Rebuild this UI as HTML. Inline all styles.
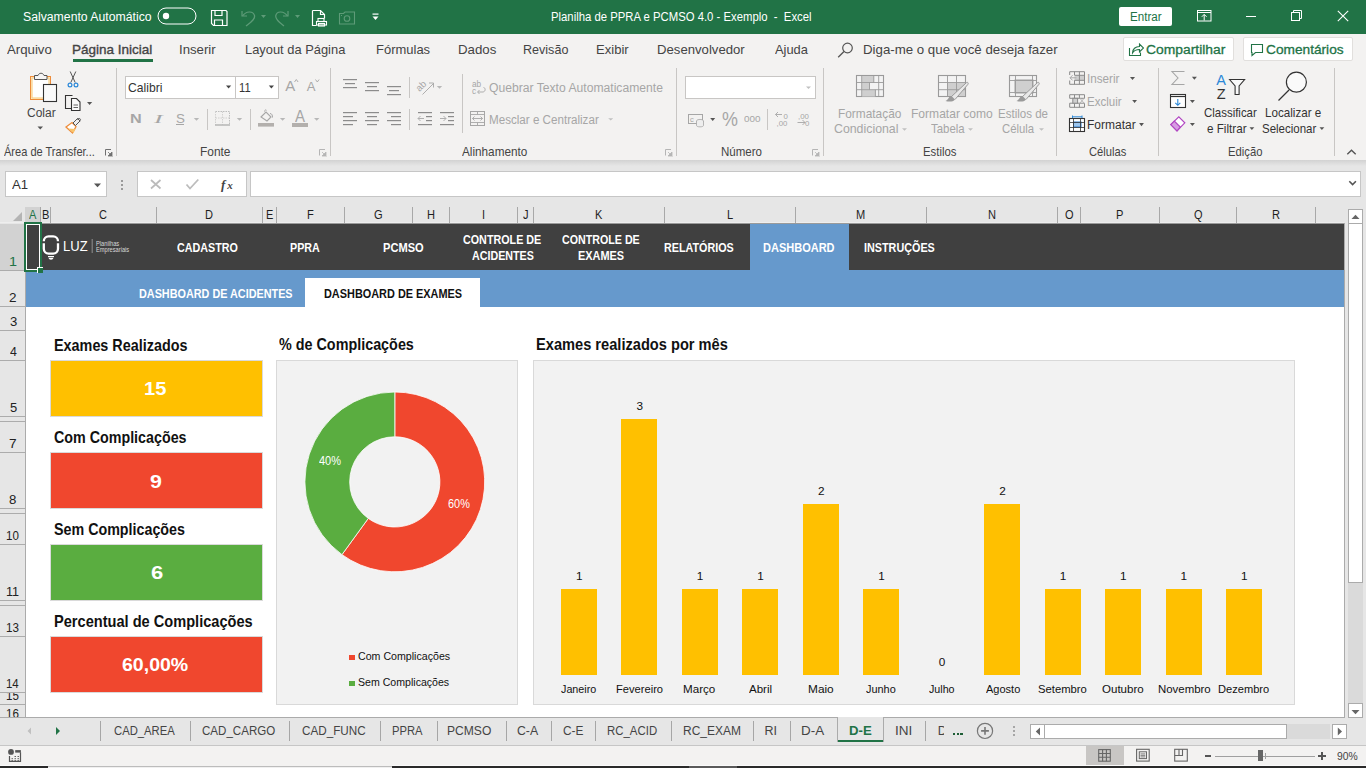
<!DOCTYPE html><html><head><meta charset="utf-8"><style>
html,body{margin:0;padding:0;width:1366px;height:768px;overflow:hidden;background:#e6e6e6}
div{position:absolute;box-sizing:border-box}
.t{line-height:0;white-space:pre;transform-origin:0 0}
svg{position:absolute}
</style></head><body>
<div style="left:0px;top:0px;width:1366px;height:34px;background:#217346;"></div>
<div class="t" style="left:22.56px;top:17px;font:normal 400 12.65px 'Liberation Sans',sans-serif;line-height:0;color:#fff;transform:scaleX(0.9684);">Salvamento Automático</div>
<svg style="position:absolute;left:157px;top:7px;" width="40" height="18" viewBox="0 0 40 18"><rect x="1" y="1" width="38" height="16" rx="8" ry="8" fill="none" stroke="#fff" stroke-width="1"/><circle cx="9" cy="9" r="3.2" fill="#fff"/></svg>
<svg style="position:absolute;left:210px;top:9px;" width="18" height="18" viewBox="0 0 18 18"><path d="M1.5 1.5h14.5l1 1v14h-13.5l-2-2z" fill="none" stroke="#fff" stroke-width="1.2"/><path d="M5 1.5v5h7v-5" fill="none" stroke="#fff" stroke-width="1.2"/><path d="M4.5 16.5v-5.5h8v5.5" fill="none" stroke="#fff" stroke-width="1.2"/></svg>
<svg style="position:absolute;left:240px;top:9px;" width="28" height="18" viewBox="0 0 28 18"><path d="M2 2v5h5" fill="none" stroke="#5e9b78" stroke-width="1.2"/><path d="M2.5 7C6 2 13 1.5 14.5 6.5C15.5 10 11 13 6 17" fill="none" stroke="#5e9b78" stroke-width="1.2"/><path d="M21 6h5l-2.5 3z" fill="#5e9b78"/></svg>
<svg style="position:absolute;left:275px;top:9px;" width="28" height="18" viewBox="0 0 28 18"><path d="M13 2v5h-5" fill="none" stroke="#5e9b78" stroke-width="1.2"/><path d="M12.5 7C9 2 2 1.5 0.8 6.5C0 10 4 13 9 17" fill="none" stroke="#5e9b78" stroke-width="1.2"/><path d="M20 6h5l-2.5 3z" fill="#5e9b78"/></svg>
<svg style="position:absolute;left:311px;top:9px;" width="18" height="18" viewBox="0 0 18 18"><path d="M1.5 1.5h8l4 4v4" fill="none" stroke="#fff" stroke-width="1.2"/><path d="M1.5 1.5v15h4" fill="none" stroke="#fff" stroke-width="1.2"/><path d="M9.5 1.5v4h4" fill="none" stroke="#fff" stroke-width="1.2"/><rect x="7" y="9.5" width="6" height="3" fill="none" stroke="#fff" stroke-width="1.1"/><rect x="5.5" y="12.5" width="10" height="3.5" fill="none" stroke="#fff" stroke-width="1.1"/><rect x="7.5" y="14.5" width="6" height="2.5" fill="none" stroke="#fff" stroke-width="1.1"/></svg>
<svg style="position:absolute;left:338px;top:10px;" width="18" height="16" viewBox="0 0 18 16"><path d="M1.5 3.5h4l1.5-1.5h9.5v12h-15z" fill="none" stroke="#5e9b78" stroke-width="1.1"/><circle cx="9" cy="8.5" r="2.8" fill="none" stroke="#5e9b78" stroke-width="1.1"/><rect x="3" y="5" width="1" height="1" fill="#5e9b78"/></svg>
<svg style="position:absolute;left:371px;top:12px;" width="10" height="10" viewBox="0 0 10 10"><rect x="1.5" y="1.5" width="6" height="1.2" fill="#fff"/><path d="M1.5 4.5h6l-3 3.5z" fill="#fff"/></svg>
<div class="t" style="left:551.36px;top:17px;font:normal 400 12.79px 'Liberation Sans',sans-serif;line-height:0;color:#fff;transform:scaleX(0.8859);">Planilha de PPRA e PCMSO 4.0 - Exemplo  -  Excel</div>
<div style="left:1119px;top:7px;width:53px;height:19px;background:#fff;border-radius:2px"></div>
<div class="t" style="left:1129.68px;top:17px;font:normal 400 12.65px 'Liberation Sans',sans-serif;line-height:0;color:#217346;transform:scaleX(0.9160);">Entrar</div>
<svg style="position:absolute;left:1197px;top:10px;" width="16" height="13" viewBox="0 0 16 13"><rect x="0.5" y="0.5" width="13.5" height="10.5" fill="none" stroke="#fff" stroke-width="1"/><path d="M0.5 2.5h13.5" stroke="#fff" stroke-width="1"/><path d="M7.2 10.5v-6M4.8 6.8l2.4-2.4 2.4 2.4" fill="none" stroke="#fff" stroke-width="1"/></svg>
<div style="left:1246px;top:16px;width:10px;height:1px;background:#fff;"></div>
<svg style="position:absolute;left:1291px;top:10px;" width="12" height="12" viewBox="0 0 12 12"><rect x="0.5" y="2.5" width="8" height="8" fill="none" stroke="#fff" stroke-width="1"/><path d="M2.5 2.5v-2h8v8h-2" fill="none" stroke="#fff" stroke-width="1"/></svg>
<svg style="position:absolute;left:1337px;top:10px;" width="12" height="12" viewBox="0 0 12 12"><path d="M0.8 0.8l10.4 10.4M11.2 0.8l-10.4 10.4" stroke="#fff" stroke-width="1.1"/></svg>
<div style="left:0px;top:34px;width:1366px;height:126px;background:#f3f2f1;"></div>
<div class="t" style="left:6.94px;top:50px;font:normal 400 12.79px 'Liberation Sans',sans-serif;line-height:0;color:#444444;transform:scaleX(1.0347);">Arquivo</div>
<div class="t" style="left:72.38px;top:50px;font:normal 400 12.79px 'Liberation Sans',sans-serif;line-height:0;color:#444444;transform:scaleX(1.0563);-webkit-text-stroke:0.35px #444444">Página Inicial</div>
<div class="t" style="left:179.27px;top:50px;font:normal 400 12.79px 'Liberation Sans',sans-serif;line-height:0;color:#444444;transform:scaleX(1.0325);">Inserir</div>
<div class="t" style="left:245.03px;top:50px;font:normal 400 12.79px 'Liberation Sans',sans-serif;line-height:0;color:#444444;transform:scaleX(1.0082);">Layout da Página</div>
<div class="t" style="left:375.82px;top:50px;font:normal 400 12.79px 'Liberation Sans',sans-serif;line-height:0;color:#444444;transform:scaleX(1.0159);">Fórmulas</div>
<div class="t" style="left:458.20px;top:50px;font:normal 400 12.79px 'Liberation Sans',sans-serif;line-height:0;color:#444444;transform:scaleX(1.0394);">Dados</div>
<div class="t" style="left:523.36px;top:50px;font:normal 400 12.79px 'Liberation Sans',sans-serif;line-height:0;color:#444444;transform:scaleX(0.9824);">Revisão</div>
<div class="t" style="left:596.22px;top:50px;font:normal 400 12.79px 'Liberation Sans',sans-serif;line-height:0;color:#444444;transform:scaleX(1.0211);">Exibir</div>
<div class="t" style="left:656.81px;top:50px;font:normal 400 12.79px 'Liberation Sans',sans-serif;line-height:0;color:#444444;transform:scaleX(1.0287);">Desenvolvedor</div>
<div class="t" style="left:774.74px;top:50px;font:normal 400 12.79px 'Liberation Sans',sans-serif;line-height:0;color:#444444;transform:scaleX(1.0065);">Ajuda</div>
<div style="left:73px;top:59px;width:80px;height:3px;background:#217346;"></div>
<svg style="position:absolute;left:837px;top:42px;" width="17" height="17" viewBox="0 0 17 17"><circle cx="10.5" cy="6" r="4.8" fill="none" stroke="#555" stroke-width="1.2"/><path d="M7 9.5l-5.8 5.8" stroke="#555" stroke-width="1.3"/></svg>
<div class="t" style="left:862.90px;top:50px;font:normal 400 12.79px 'Liberation Sans',sans-serif;line-height:0;color:#444444;transform:scaleX(1.0378);">Diga-me o que você deseja fazer</div>
<div style="left:1123px;top:37px;width:111px;height:24px;background:#fff;border:1px solid #e1dfdd;border-radius:2px"></div>
<svg style="position:absolute;left:1128px;top:42px;" width="16" height="15" viewBox="0 0 16 15"><path d="M1.5 6v7.5h11v-3" fill="none" stroke="#217346" stroke-width="1.1"/><path d="M4.5 11c0-4 3-6.5 7-6.5V2l4 4-4 4V7.5c-3 0-5.5 1-7 3.5z" fill="none" stroke="#217346" stroke-width="1.1"/></svg>
<div class="t" style="left:1145.59px;top:50px;font:normal 400 13.52px 'Liberation Sans',sans-serif;line-height:0;color:#217346;transform:scaleX(1.0260);-webkit-text-stroke:0.3px #217346">Compartilhar</div>
<div style="left:1243px;top:37px;width:110px;height:24px;background:#fff;border:1px solid #e1dfdd;border-radius:2px"></div>
<svg style="position:absolute;left:1250px;top:43px;" width="14" height="14" viewBox="0 0 14 14"><path d="M1.5 1.5h11v8h-7l-3.5 3v-3h-0.5z" fill="none" stroke="#217346" stroke-width="1.1"/></svg>
<div class="t" style="left:1266.40px;top:50px;font:normal 400 13.52px 'Liberation Sans',sans-serif;line-height:0;color:#217346;transform:scaleX(1.0131);-webkit-text-stroke:0.3px #217346">Comentários</div>
<div style="left:116px;top:68px;width:1px;height:88px;background:#c8c6c4;"></div>
<div style="left:330px;top:68px;width:1px;height:88px;background:#c8c6c4;"></div>
<div style="left:676px;top:68px;width:1px;height:88px;background:#c8c6c4;"></div>
<div style="left:823px;top:68px;width:1px;height:88px;background:#c8c6c4;"></div>
<div style="left:1056px;top:68px;width:1px;height:88px;background:#c8c6c4;"></div>
<div style="left:1158px;top:68px;width:1px;height:88px;background:#c8c6c4;"></div>
<div style="left:1334px;top:68px;width:1px;height:88px;background:#c8c6c4;"></div>
<svg style="position:absolute;left:28px;top:70px;" width="32" height="34" viewBox="28 70 32 34"><rect x="30.5" y="76.5" width="20" height="23" fill="#fdf1d8" stroke="#ed8c3a" stroke-width="1"/><rect x="32" y="78" width="17" height="20" fill="#fff" stroke="#f7c873" stroke-width="1"/><path d="M34.5 79.5v-4h3.5c1-3 5-3 6 0h3v4z" fill="#f5f5f5" stroke="#555" stroke-width="1"/><rect x="43.5" y="84.5" width="13" height="17" fill="#fafafa" stroke="#333" stroke-width="1.1"/></svg>
<div class="t" style="left:26.71px;top:113px;font:normal 400 12.65px 'Liberation Sans',sans-serif;line-height:0;color:#444444;transform:scaleX(0.9484);">Colar</div>
<svg style="position:absolute;left:36px;top:125px;" width="10" height="7" viewBox="36 125 10 7"><path d="M37.5 126.5h5.5l-2.75 3z" fill="#555"/></svg>
<svg style="position:absolute;left:64px;top:69px;" width="18" height="20" viewBox="64 69 18 20"><path d="M70.2 71.5l5 11M75.8 71.5l-5 11" stroke="#555" stroke-width="1"/><circle cx="70" cy="85" r="1.9" fill="none" stroke="#2b88d8" stroke-width="1.2"/><circle cx="76" cy="85" r="1.9" fill="none" stroke="#2b88d8" stroke-width="1.2"/></svg>
<svg style="position:absolute;left:63px;top:93px;" width="32" height="20" viewBox="63 93 32 20"><path d="M72.5 95.5h-7v13h5.5" fill="none" stroke="#333" stroke-width="1.1"/><path d="M71.5 98.5h5l3.5 3.5v8.5h-8.5z" fill="#fafafa" stroke="#333" stroke-width="1.1"/><path d="M73.5 105h4.5M73.5 107.5h4.5" stroke="#555" stroke-width="0.9"/><path d="M87 102h5.2l-2.6 3z" fill="#555"/></svg>
<svg style="position:absolute;left:63px;top:117px;" width="20" height="18" viewBox="63 117 20 18"><path d="M66 127l6-4.5 4 4-3.5 6.5z" fill="#fff" stroke="#ed8c3a" stroke-width="1.3"/><path d="M68 128.5l5.5 4.5 2-4z" fill="#f9c46a"/><path d="M73 123l4.5-4.5 2.5 2.5-4.5 4.5z" fill="#eee" stroke="#555" stroke-width="1"/><path d="M77 119.2l2.6-0.8 0.8 0.8-0.8 2.6" fill="none" stroke="#555" stroke-width="1"/></svg>
<div class="t" style="left:4.10px;top:152px;font:normal 400 12.06px 'Liberation Sans',sans-serif;line-height:0;color:#444444;transform:scaleX(0.9162);">Área de Transfer...</div>
<svg style="position:absolute;left:104px;top:147px;" width="10" height="10" viewBox="104 147 10 10"><path d="M105.5 155.5V149.5H111" fill="none" stroke="#707070" stroke-width="1"/><path d="M108 152l4.5 4.5M112 152v4h-4z" fill="#707070" stroke="#707070" stroke-width="0.8"/></svg>
<div style="left:125px;top:76px;width:111px;height:23px;background:#fff;border:1px solid #c8c6c4"></div>
<div style="left:235px;top:76px;width:44px;height:23px;background:#fff;border:1px solid #c8c6c4"></div>
<div class="t" style="left:128.11px;top:88px;font:normal 400 12.94px 'Liberation Sans',sans-serif;line-height:0;color:#333;transform:scaleX(0.9378);">Calibri</div>
<div class="t" style="left:238.94px;top:88px;font:normal 400 12.94px 'Liberation Sans',sans-serif;line-height:0;color:#333;transform:scaleX(0.8635);">11</div>
<svg style="position:absolute;left:224px;top:83px;" width="10" height="8" viewBox="224 83 10 8"><path d="M226 85.5h5.2l-2.6 3z" fill="#444"/></svg>
<svg style="position:absolute;left:267px;top:83px;" width="10" height="8" viewBox="267 83 10 8"><path d="M268.8 85.5h5.2l-2.6 3z" fill="#444"/></svg>
<div class="t" style="left:285.24px;top:86px;font:normal 400 14.97px 'Liberation Sans',sans-serif;line-height:0;color:#a6a6a6;">A</div>
<svg style="position:absolute;left:293px;top:78px;" width="7" height="6" viewBox="293 78 7 6"><path d="M294.5 82l1.8-2.5 1.8 2.5" fill="none" stroke="#a6a6a6" stroke-width="0.9"/></svg>
<div class="t" style="left:306.74px;top:87px;font:normal 400 13.08px 'Liberation Sans',sans-serif;line-height:0;color:#a6a6a6;">A</div>
<svg style="position:absolute;left:314px;top:78px;" width="7" height="6" viewBox="314 78 7 6"><path d="M315.5 79.5l1.8 2.5 1.8-2.5" fill="none" stroke="#a6a6a6" stroke-width="0.9"/></svg>
<div class="t" style="left:129.69px;top:119px;font:normal 700 12.79px 'Liberation Sans',sans-serif;line-height:0;color:#a6a6a6;transform:scaleX(1.2667);">N</div>
<div class="t" style="left:153.71px;top:119px;font:normal 400 12.79px 'Liberation Serif',serif;line-height:0;color:#a6a6a6;transform:scaleX(2.0444);font-style:italic">I</div>
<div class="t" style="left:175.51px;top:119px;font:normal 400 12.79px 'Liberation Sans',sans-serif;line-height:0;color:#a6a6a6;transform:scaleX(1.0441);">S</div>
<div style="left:176px;top:124px;width:8px;height:1px;background:#a6a6a6;"></div>
<svg style="position:absolute;left:192px;top:116px;" width="9" height="6" viewBox="192 116 9 6"><path d="M193.8 118h5.4l-2.7 2.7z" fill="#b8b8b8"/></svg>
<div style="left:207px;top:109px;width:1px;height:21px;background:#c8c6c4;"></div>
<svg style="position:absolute;left:213px;top:109px;" width="20" height="19" viewBox="213 109 20 19"><path d="M215.5 111.5h14v13" fill="none" stroke="#b8b8b8" stroke-width="0.9" stroke-dasharray="1.5 1"/><path d="M215.5 111.5v13M222.5 111.5v13M215.5 118h14" fill="none" stroke="#c8c8c8" stroke-width="0.8" stroke-dasharray="1.5 1"/><path d="M215 125h15" stroke="#a6a6a6" stroke-width="1.2"/></svg>
<svg style="position:absolute;left:235px;top:116px;" width="9" height="6" viewBox="235 116 9 6"><path d="M236.8 118h5.4l-2.7 2.7z" fill="#b8b8b8"/></svg>
<div style="left:250px;top:109px;width:1px;height:21px;background:#c8c6c4;"></div>
<svg style="position:absolute;left:256px;top:108px;" width="22" height="20" viewBox="256 108 22 20"><path d="M261 117l5-5 5 5-4 4z" fill="none" stroke="#a6a6a6" stroke-width="1.1"/><path d="M264.5 111.5c0-1.5 1.5-2 2-1.2" fill="none" stroke="#a6a6a6" stroke-width="1"/><path d="M270 113.5c2 0 2.5 2 2.5 4" fill="none" stroke="#a6a6a6" stroke-width="1"/><rect x="258" y="123" width="16" height="3.6" fill="#b3b0ad"/></svg>
<svg style="position:absolute;left:278px;top:116px;" width="9" height="6" viewBox="278 116 9 6"><path d="M279.9 118h5.4l-2.7 2.7z" fill="#b8b8b8"/></svg>
<div class="t" style="left:295.24px;top:117px;font:normal 400 15.99px 'Liberation Sans',sans-serif;line-height:0;color:#a6a6a6;transform:scaleX(0.9373);">A</div>
<div style="left:292px;top:123px;width:16px;height:4px;background:#b3b0ad;"></div>
<svg style="position:absolute;left:312px;top:116px;" width="9" height="6" viewBox="312 116 9 6"><path d="M314 118h5.4l-2.7 2.7z" fill="#b8b8b8"/></svg>
<div class="t" style="left:199.71px;top:152px;font:normal 400 12.06px 'Liberation Sans',sans-serif;line-height:0;color:#444444;transform:scaleX(0.9893);">Fonte</div>
<svg style="position:absolute;left:318px;top:147px;" width="10" height="10" viewBox="318 147 10 10"><path d="M319.5 155.5V149.5H325" fill="none" stroke="#b5b5b5" stroke-width="1"/><path d="M322 152l4.5 4.5M326 152v4h-4z" fill="#b5b5b5" stroke="#b5b5b5" stroke-width="0.8"/></svg>
<svg style="position:absolute;left:335px;top:72px;" width="130" height="60" viewBox="335 72 130 60"><rect x="343" y="79" width="14" height="1.2" fill="#8c8c8c"/><rect x="345" y="83" width="10" height="1.2" fill="#8c8c8c"/><rect x="343" y="87" width="14" height="1.2" fill="#8c8c8c"/><rect x="365" y="82" width="14" height="1.2" fill="#8c8c8c"/><rect x="367" y="86" width="10" height="1.2" fill="#8c8c8c"/><rect x="365" y="90" width="14" height="1.2" fill="#8c8c8c"/><rect x="387" y="86" width="14" height="1.2" fill="#8c8c8c"/><rect x="389" y="90" width="10" height="1.2" fill="#8c8c8c"/><rect x="387" y="94" width="14" height="1.2" fill="#8c8c8c"/><rect x="343" y="112" width="14" height="1.2" fill="#8c8c8c"/><rect x="343" y="116" width="10" height="1.2" fill="#8c8c8c"/><rect x="343" y="120" width="14" height="1.2" fill="#8c8c8c"/><rect x="343" y="124" width="10" height="1.2" fill="#8c8c8c"/><rect x="365" y="112" width="14" height="1.2" fill="#8c8c8c"/><rect x="367" y="116" width="10" height="1.2" fill="#8c8c8c"/><rect x="365" y="120" width="14" height="1.2" fill="#8c8c8c"/><rect x="367" y="124" width="10" height="1.2" fill="#8c8c8c"/><rect x="387" y="112" width="14" height="1.2" fill="#8c8c8c"/><rect x="391" y="116" width="10" height="1.2" fill="#8c8c8c"/><rect x="387" y="120" width="14" height="1.2" fill="#8c8c8c"/><rect x="391" y="124" width="10" height="1.2" fill="#8c8c8c"/><rect x="418" y="112" width="14" height="1.2" fill="#8c8c8c"/><rect x="418" y="124" width="14" height="1.2" fill="#8c8c8c"/><rect x="426" y="116" width="6" height="1.2" fill="#8c8c8c"/><rect x="426" y="120" width="6" height="1.2" fill="#8c8c8c"/><rect x="440" y="112" width="14" height="1.2" fill="#8c8c8c"/><rect x="440" y="124" width="14" height="1.2" fill="#8c8c8c"/><rect x="448" y="116" width="6" height="1.2" fill="#8c8c8c"/><rect x="448" y="120" width="6" height="1.2" fill="#8c8c8c"/><path d="M424 118.5h-6M420.5 116l-2.5 2.5 2.5 2.5" fill="none" stroke="#b0b0b0" stroke-width="1"/><path d="M440 118.5h6M443.5 116l2.5 2.5-2.5 2.5" fill="none" stroke="#b0b0b0" stroke-width="1"/></svg>
<div style="left:409px;top:77px;width:1px;height:21px;background:#c8c6c4;"></div>
<div style="left:409px;top:109px;width:1px;height:21px;background:#c8c6c4;"></div>
<svg style="position:absolute;left:414px;top:76px;" width="32" height="22" viewBox="414 76 32 22"><text x="0" y="0" transform="translate(419.5 92) rotate(-45)" font-family="Liberation Sans" font-size="9.5" fill="#a6a6a6">ab</text><path d="M422.5 94.5l11-11M429 83h4.5v4.5" fill="none" stroke="#a6a6a6" stroke-width="0.9"/><path d="M436.8 86h5.4l-2.7 2.7z" fill="#b8b8b8"/></svg>
<div style="left:462px;top:74px;width:1px;height:59px;background:#c8c6c4;"></div>
<svg style="position:absolute;left:469px;top:78px;" width="20" height="18" viewBox="469 78 20 18"><text x="472" y="86.5" font-family="Liberation Sans" font-size="8.3" fill="#a6a6a6">ab</text><text x="472" y="94" font-family="Liberation Sans" font-size="8.3" fill="#a6a6a6">c</text><path d="M483.5 87.5c2 0 2.5 4-0.5 4.5h-5M479.5 90l-2 2 2 2" fill="none" stroke="#a6a6a6" stroke-width="0.9"/></svg>
<div class="t" style="left:488.92px;top:88px;font:normal 400 13.08px 'Liberation Sans',sans-serif;line-height:0;color:#a6a6a6;transform:scaleX(0.9286);">Quebrar Texto Automaticamente</div>
<svg style="position:absolute;left:468px;top:109px;" width="20" height="19" viewBox="468 109 20 19"><rect x="470.5" y="111.5" width="14" height="14" fill="none" stroke="#a6a6a6" stroke-width="1"/><path d="M470.5 114.5h14M470.5 122.5h14M477.5 111.5v3M477.5 122.5v3" stroke="#a6a6a6" stroke-width="0.9"/><path d="M472.5 118.5h10M474.5 116.5l-2 2 2 2M480.5 116.5l2 2-2 2" fill="none" stroke="#a6a6a6" stroke-width="0.9"/></svg>
<div class="t" style="left:488.56px;top:120px;font:normal 400 13.08px 'Liberation Sans',sans-serif;line-height:0;color:#a6a6a6;transform:scaleX(0.8884);">Mesclar e Centralizar</div>
<svg style="position:absolute;left:606px;top:116px;" width="9" height="6" viewBox="606 116 9 6"><path d="M608.2 118.2h5l-2.5 2.4z" fill="#c0c0c0"/></svg>
<div class="t" style="left:462.30px;top:152px;font:normal 400 12.06px 'Liberation Sans',sans-serif;line-height:0;color:#444444;transform:scaleX(0.9750);">Alinhamento</div>
<svg style="position:absolute;left:664px;top:147px;" width="10" height="10" viewBox="664 147 10 10"><path d="M665.5 155.5V149.5H671" fill="none" stroke="#b5b5b5" stroke-width="1"/><path d="M668 152l4.5 4.5M672 152v4h-4z" fill="#b5b5b5" stroke="#b5b5b5" stroke-width="0.8"/></svg>
<div style="left:685px;top:76px;width:131px;height:23px;background:#fff;border:1px solid #c8c6c4"></div>
<svg style="position:absolute;left:804px;top:84px;" width="9" height="7" viewBox="804 84 9 7"><path d="M806 86.5h5l-2.5 2.4z" fill="#c0c0c0"/></svg>
<svg style="position:absolute;left:686px;top:111px;" width="32" height="18" viewBox="686 111 32 18"><rect x="688.5" y="114.5" width="14" height="9" fill="none" stroke="#a6a6a6" stroke-width="1"/><text x="690" y="122" font-family="Liberation Sans" font-size="7.5" fill="#a6a6a6">c</text><ellipse cx="700" cy="121" rx="3.5" ry="1.6" fill="#eee" stroke="#a6a6a6" stroke-width="0.8"/><path d="M696.5 121v4.5c0 1.8 7 1.8 7 0v-4.5" fill="#eee" stroke="#a6a6a6" stroke-width="0.8"/><path d="M710.2 118h5l-2.5 3z" fill="#555"/></svg>
<div class="t" style="left:721.98px;top:119px;font:normal 400 19.91px 'Liberation Sans',sans-serif;line-height:0;color:#a6a6a6;transform:scaleX(0.9011);">%</div>
<div class="t" style="left:743.51px;top:119px;font:normal 400 9.59px 'Liberation Sans',sans-serif;line-height:0;color:#a6a6a6;transform:scaleX(1.0337);">000</div>
<div style="left:767px;top:109px;width:1px;height:21px;background:#c8c6c4;"></div>
<svg style="position:absolute;left:773px;top:110px;" width="42" height="18" viewBox="773 110 42 18"><path d="M782 114.5h-6.5M778 112l-2.5 2.5 2.5 2.5" fill="none" stroke="#a6a6a6" stroke-width="0.9"/><text x="783.5" y="118.5" font-family="Liberation Sans" font-size="7.8" fill="#a6a6a6">0</text><text x="776.5" y="126.3" font-family="Liberation Sans" font-size="7.8" fill="#a6a6a6">,00</text><text x="798" y="118.5" font-family="Liberation Sans" font-size="7.8" fill="#a6a6a6">,00</text><path d="M797.5 122.5h7.5M802.5 120l2.5 2.5-2.5 2.5" fill="none" stroke="#a6a6a6" stroke-width="0.9"/><text x="805" y="126.3" font-family="Liberation Sans" font-size="7.8" fill="#a6a6a6">0</text></svg>
<div class="t" style="left:720.84px;top:152px;font:normal 400 12.06px 'Liberation Sans',sans-serif;line-height:0;color:#444444;transform:scaleX(0.9571);">Número</div>
<svg style="position:absolute;left:811px;top:147px;" width="10" height="10" viewBox="811 147 10 10"><path d="M812.5 155.5V149.5H818" fill="none" stroke="#b5b5b5" stroke-width="1"/><path d="M815 152l4.5 4.5M819 152v4h-4z" fill="#b5b5b5" stroke="#b5b5b5" stroke-width="0.8"/></svg>
<svg style="position:absolute;left:854px;top:73px;" width="34" height="26" viewBox="854 73 34 26"><rect x="856.5" y="75.5" width="27" height="21" fill="#f3f3f3" stroke="#9a9a9a" stroke-width="1.1"/><rect x="862" y="76" width="12" height="6.5" fill="#cfcfcf"/><rect x="862" y="83" width="7.5" height="6.5" fill="#cfcfcf"/><rect x="862" y="90" width="13.5" height="6.5" fill="#cfcfcf"/><path d="M861.7 75.5v21M878.7 75.5v21M856.5 82.5h27M856.5 89.7h27M873.8 75.5v7M869.5 82.5v7.2M875.4 89.7v7" fill="none" stroke="#9a9a9a" stroke-width="0.9"/></svg>
<div class="t" style="left:838.31px;top:114px;font:normal 400 12.79px 'Liberation Sans',sans-serif;line-height:0;color:#a6a6a6;transform:scaleX(0.9288);">Formatação</div>
<div class="t" style="left:834.00px;top:129px;font:normal 400 12.79px 'Liberation Sans',sans-serif;line-height:0;color:#a6a6a6;transform:scaleX(0.9649);">Condicional</div>
<svg style="position:absolute;left:901px;top:127px;" width="7" height="5" viewBox="901 127 7 5"><path d="M902 128.3h5l-2.5 2.4z" fill="#c0c0c0"/></svg>
<svg style="position:absolute;left:936px;top:73px;" width="36" height="32" viewBox="936 73 36 32"><rect x="938.5" y="75.5" width="27" height="21" fill="#f3f3f3" stroke="#9a9a9a" stroke-width="1.1"/><rect x="947" y="83" width="18" height="13" fill="#cfcfcf"/><path d="M947.5 75.5v21M956.5 75.5v21M938.5 82.5h27M938.5 89.7h27" fill="none" stroke="#9a9a9a" stroke-width="0.9"/><path d="M951 97l15-14c1.5-1.5 3 0 1.8 1.5L955 99.5" fill="#e8e8e8" stroke="#9a9a9a" stroke-width="1"/><path d="M955 99.5c-2 2.5-6 2.5-9.5 1.5 3-1 3-5 6-5z" fill="#9a9a9a"/></svg>
<div class="t" style="left:910.60px;top:114px;font:normal 400 12.79px 'Liberation Sans',sans-serif;line-height:0;color:#a6a6a6;transform:scaleX(0.9443);">Formatar como</div>
<div class="t" style="left:931.22px;top:129px;font:normal 400 12.79px 'Liberation Sans',sans-serif;line-height:0;color:#a6a6a6;transform:scaleX(0.8922);">Tabela</div>
<svg style="position:absolute;left:967px;top:127px;" width="7" height="5" viewBox="967 127 7 5"><path d="M968 128.3h5l-2.5 2.4z" fill="#c0c0c0"/></svg>
<svg style="position:absolute;left:1007px;top:73px;" width="36" height="32" viewBox="1007 73 36 32"><rect x="1009.5" y="75.5" width="27" height="21" fill="#f3f3f3" stroke="#9a9a9a" stroke-width="1.1"/><rect x="1015" y="80" width="18" height="13" fill="#cfcfcf" stroke="#9a9a9a" stroke-width="0.9"/><path d="M1015.5 75.5v21M1009.5 80.5h27M1009.5 92.5h27M1032.5 75.5v21" fill="none" stroke="#9a9a9a" stroke-width="0.9"/><path d="M1022 97l15-14c1.5-1.5 3 0 1.8 1.5L1026 99.5" fill="#e8e8e8" stroke="#9a9a9a" stroke-width="1"/><path d="M1026 99.5c-2 2.5-6 2.5-9.5 1.5 3-1 3-5 6-5z" fill="#9a9a9a"/></svg>
<div class="t" style="left:997.54px;top:114px;font:normal 400 12.79px 'Liberation Sans',sans-serif;line-height:0;color:#a6a6a6;transform:scaleX(0.9029);">Estilos de</div>
<div class="t" style="left:1002.45px;top:129px;font:normal 400 12.79px 'Liberation Sans',sans-serif;line-height:0;color:#a6a6a6;transform:scaleX(0.8855);">Célula</div>
<svg style="position:absolute;left:1038px;top:127px;" width="7" height="5" viewBox="1038 127 7 5"><path d="M1039 128.3h5l-2.5 2.4z" fill="#c0c0c0"/></svg>
<div class="t" style="left:923.26px;top:152px;font:normal 400 12.06px 'Liberation Sans',sans-serif;line-height:0;color:#444444;transform:scaleX(0.9436);">Estilos</div>
<svg style="position:absolute;left:1067px;top:69px;" width="22" height="18" viewBox="1067 69 22 18"><rect x="1074.5" y="75.5" width="10" height="5" fill="#cfcfcf"/><path d="M1069.7 75V71.7H1084.5V84.3H1069.7V80.5M1074.5 71.7v3.4M1079.4 71.7v12.6M1074.5 75.3H1084.5M1074.5 80.3H1084.5M1074.5 80.3v4" fill="none" stroke="#8a8a8a" stroke-width="1"/><path d="M1076.5 77.8h-6.5M1072.6 75.2l-2.6 2.6 2.6 2.6" fill="none" stroke="#a8a8a8" stroke-width="1"/></svg>
<div class="t" style="left:1087.15px;top:79px;font:normal 400 12.50px 'Liberation Sans',sans-serif;line-height:0;color:#a6a6a6;transform:scaleX(0.9348);">Inserir</div>
<svg style="position:absolute;left:1128px;top:75px;" width="9" height="6" viewBox="1128 75 9 6"><path d="M1130 77h5l-2.5 2.9z" fill="#555"/></svg>
<svg style="position:absolute;left:1067px;top:92px;" width="22" height="18" viewBox="1067 92 22 18"><path d="M1069.7 94.7H1084.5V98.3H1069.7z M1069.7 103.2H1084.5V107.3H1069.7z M1074.5 94.7v3.6M1079.4 94.7v3.6M1074.5 103.2v4.1M1079.4 103.2v4.1" fill="none" stroke="#8a8a8a" stroke-width="1"/><rect x="1072.8" y="98.3" width="4.8" height="4.9" fill="#cfcfcf" stroke="#8a8a8a" stroke-width="1"/><path d="M1079.5 97.8l5 5.8M1084.5 97.8l-5 5.8" stroke="#b0b0b0" stroke-width="0.9"/></svg>
<div class="t" style="left:1087.28px;top:102px;font:normal 400 12.50px 'Liberation Sans',sans-serif;line-height:0;color:#a6a6a6;transform:scaleX(0.9225);">Excluir</div>
<svg style="position:absolute;left:1130px;top:98px;" width="9" height="6" viewBox="1130 98 9 6"><path d="M1132.2 100h4.8l-2.4 2.9z" fill="#555"/></svg>
<svg style="position:absolute;left:1067px;top:114px;" width="22" height="20" viewBox="1067 114 22 20"><rect x="1069.5" y="118.5" width="15" height="13" fill="#fff" stroke="#333" stroke-width="1.1"/><rect x="1073.5" y="122" width="7.5" height="5" fill="#9cc6ee" stroke="#2b7cd3" stroke-width="1"/><path d="M1069.5 122.5h15M1069.5 127.5h15M1073.5 118.5v13M1080.5 118.5v13" stroke="#333" stroke-width="0.8"/><path d="M1072.5 116.8h9.5M1072.5 115.5v2.6M1082 115.5v2.6" stroke="#2b88d8" stroke-width="1"/></svg>
<div class="t" style="left:1087.23px;top:125px;font:normal 400 13.08px 'Liberation Sans',sans-serif;line-height:0;color:#333;transform:scaleX(0.9170);">Formatar</div>
<svg style="position:absolute;left:1137px;top:121px;" width="9" height="6" viewBox="1137 121 9 6"><path d="M1139.1 123h4.8l-2.4 3.2z" fill="#555"/></svg>
<div class="t" style="left:1088.72px;top:152px;font:normal 400 12.06px 'Liberation Sans',sans-serif;line-height:0;color:#444444;transform:scaleX(0.9263);">Células</div>
<svg style="position:absolute;left:1169px;top:69px;" width="30" height="18" viewBox="1169 69 30 18"><path d="M1184.5 71.5h-12.5l6 6.5-6 6.5h12.5" fill="none" stroke="#a6a6a6" stroke-width="1.1"/><path d="M1191.9 76.8h5l-2.5 3z" fill="#555"/></svg>
<svg style="position:absolute;left:1168px;top:92px;" width="30" height="18" viewBox="1168 92 30 18"><rect x="1170.5" y="94.5" width="15" height="13" fill="#fff" stroke="#333" stroke-width="1.1"/><path d="M1170.5 96.5h15" stroke="#333" stroke-width="1.2"/><path d="M1177.8 99v6M1175.3 102.8l2.5 2.5 2.5-2.5" fill="none" stroke="#2b88d8" stroke-width="1.1"/><path d="M1189.9 100h5l-2.5 3z" fill="#555"/></svg>
<svg style="position:absolute;left:1168px;top:115px;" width="30" height="19" viewBox="1168 115 30 19"><path d="M1170.8 124.6l8-7.8 6 6-7.8 8z" fill="#fff" stroke="#b146c2" stroke-width="1.2"/><path d="M1170.8 124.6l3.5-3.5 6 6-3.3 3.8z" fill="#d79be3" stroke="#b146c2" stroke-width="1.2"/><path d="M1189.9 123h5l-2.5 3z" fill="#555"/></svg>
<svg style="position:absolute;left:1214px;top:71px;" width="34" height="30" viewBox="1214 71 34 30"><text x="1216.3" y="84.8" font-family="Liberation Sans" font-size="14.5" fill="#2b88d8">A</text><text x="1216.8" y="98.9" font-family="Liberation Sans" font-size="14.5" fill="#333">Z</text><path d="M1229.6 79.5h15l-5.5 6.5v8.5h-4v-8.5z" fill="#fafafa" stroke="#333" stroke-width="1.1"/></svg>
<div class="t" style="left:1203.95px;top:113px;font:normal 400 12.94px 'Liberation Sans',sans-serif;line-height:0;color:#333;transform:scaleX(0.8849);">Classificar</div>
<div class="t" style="left:1206.79px;top:129px;font:normal 400 12.94px 'Liberation Sans',sans-serif;line-height:0;color:#333;transform:scaleX(0.9020);">e Filtrar</div>
<svg style="position:absolute;left:1249px;top:126px;" width="7" height="5" viewBox="1249 126 7 5"><path d="M1249.5 127.3h4.8l-2.4 2.6z" fill="#555"/></svg>
<svg style="position:absolute;left:1276px;top:69px;" width="34" height="34" viewBox="1276 69 34 34"><circle cx="1296.4" cy="82.2" r="10" fill="#fafafa" stroke="#333" stroke-width="1.2"/><path d="M1289 90l-10.5 10.5" stroke="#333" stroke-width="1.2"/></svg>
<div class="t" style="left:1265.34px;top:113px;font:normal 400 12.94px 'Liberation Sans',sans-serif;line-height:0;color:#333;transform:scaleX(0.8993);">Localizar e</div>
<div class="t" style="left:1261.90px;top:129px;font:normal 400 12.94px 'Liberation Sans',sans-serif;line-height:0;color:#333;transform:scaleX(0.8878);">Selecionar</div>
<svg style="position:absolute;left:1318px;top:126px;" width="7" height="5" viewBox="1318 126 7 5"><path d="M1319.5 127.3h4.8l-2.4 2.6z" fill="#555"/></svg>
<div class="t" style="left:1228.36px;top:152px;font:normal 400 12.06px 'Liberation Sans',sans-serif;line-height:0;color:#444444;transform:scaleX(0.9357);">Edição</div>
<svg style="position:absolute;left:1344px;top:146px;" width="14" height="10" viewBox="1344 146 14 10"><path d="M1347.3 154.3l4.2-4 4.2 4" fill="none" stroke="#555" stroke-width="1.4"/></svg>
<div style="left:0px;top:160px;width:1366px;height:47px;background:#e6e6e6;"></div>
<div style="left:0px;top:160px;width:1366px;height:6px;background:linear-gradient(#d2d2d2,#e6e6e6);"></div>
<div style="left:5px;top:171px;width:102px;height:26px;background:#fff;border:1px solid #c6c6c6"></div>
<div class="t" style="left:12.24px;top:185px;font:normal 400 12.94px 'Liberation Sans',sans-serif;line-height:0;color:#333;transform:scaleX(1.0182);">A1</div>
<svg style="position:absolute;left:92px;top:182px;" width="10" height="7" viewBox="92 182 10 7"><path d="M94 183.5h7l-3.5 3.8z" fill="#555"/></svg>
<div style="left:121px;top:180px;width:2px;height:2px;background:#9a9a9a;"></div>
<div style="left:121px;top:184px;width:2px;height:2px;background:#9a9a9a;"></div>
<div style="left:121px;top:188px;width:2px;height:2px;background:#9a9a9a;"></div>
<div style="left:137px;top:171px;width:110px;height:26px;background:#fff;border:1px solid #c6c6c6"></div>
<svg style="position:absolute;left:148px;top:177px;" width="16" height="14" viewBox="148 177 16 14"><path d="M151 180l9.5 8.5M160.5 180l-9.5 8.5" stroke="#bbbbbb" stroke-width="1.7"/></svg>
<svg style="position:absolute;left:184px;top:177px;" width="17" height="15" viewBox="184 177 17 15"><path d="M186.5 184.5l3.5 4 8.3-9" fill="none" stroke="#bcbcbc" stroke-width="1.8"/></svg>
<div class="t" style="left:221.12px;top:185px;font:normal 400 13.00px 'Liberation Serif',serif;line-height:0;color:#444;font-style:italic;font-weight:700">f</div>
<div class="t" style="left:227.14px;top:185px;font:normal 400 11.00px 'Liberation Serif',serif;line-height:0;color:#444;font-style:italic;font-weight:700">x</div>
<div style="left:250px;top:171px;width:1111px;height:26px;background:#fff;border:1px solid #c6c6c6"></div>
<svg style="position:absolute;left:1343px;top:178px;" width="16" height="10" viewBox="1343 178 16 10"><path d="M1349.3 181.3l3.3 3.3 3.3-3.3" fill="none" stroke="#555" stroke-width="1.6"/></svg>
<div style="left:0px;top:207px;width:1344px;height:16px;background:#e6e6e6;"></div>
<div style="left:0px;top:222px;width:1344px;height:1px;background:#eeeeee;"></div>
<div style="left:0px;top:223px;width:1344px;height:1px;background:#9a9a9a;"></div>
<svg style="position:absolute;left:10px;top:208px;" width="14" height="14" viewBox="10 208 14 14"><path d="M22 212v9h-9z" fill="#b4b4b4"/></svg>
<div style="left:25px;top:207px;width:16px;height:15px;background:#d2d2d2;"></div>
<div style="left:40px;top:207px;width:1px;height:16px;background:#a8a8a8;"></div>
<div class="t" style="left:29.10px;top:215px;font:normal 400 13.08px 'Liberation Sans',sans-serif;line-height:0;color:#217346;transform:scaleX(0.8461);">A</div>
<div style="left:50px;top:207px;width:1px;height:16px;background:#a8a8a8;"></div>
<div class="t" style="left:41.66px;top:215px;font:normal 400 13.08px 'Liberation Sans',sans-serif;line-height:0;color:#1e1e1e;transform:scaleX(0.8476);">B</div>
<div style="left:156px;top:207px;width:1px;height:16px;background:#a8a8a8;"></div>
<div class="t" style="left:99.41px;top:215px;font:normal 400 13.08px 'Liberation Sans',sans-serif;line-height:0;color:#1e1e1e;transform:scaleX(0.8400);">C</div>
<div style="left:262px;top:207px;width:1px;height:16px;background:#a8a8a8;"></div>
<div class="t" style="left:205.27px;top:215px;font:normal 400 13.08px 'Liberation Sans',sans-serif;line-height:0;color:#1e1e1e;transform:scaleX(0.8468);">D</div>
<div style="left:276px;top:207px;width:1px;height:16px;background:#a8a8a8;"></div>
<div class="t" style="left:265.62px;top:215px;font:normal 400 13.08px 'Liberation Sans',sans-serif;line-height:0;color:#1e1e1e;transform:scaleX(0.8400);">E</div>
<div style="left:344px;top:207px;width:1px;height:16px;background:#a8a8a8;"></div>
<div class="t" style="left:306.89px;top:215px;font:normal 400 13.08px 'Liberation Sans',sans-serif;line-height:0;color:#1e1e1e;transform:scaleX(0.8482);">F</div>
<div style="left:412px;top:207px;width:1px;height:16px;background:#a8a8a8;"></div>
<div class="t" style="left:374.25px;top:215px;font:normal 400 13.08px 'Liberation Sans',sans-serif;line-height:0;color:#1e1e1e;transform:scaleX(0.8461);">G</div>
<div style="left:449px;top:207px;width:1px;height:16px;background:#a8a8a8;"></div>
<div class="t" style="left:427.00px;top:215px;font:normal 400 13.08px 'Liberation Sans',sans-serif;line-height:0;color:#1e1e1e;transform:scaleX(0.8472);">H</div>
<div style="left:517px;top:207px;width:1px;height:16px;background:#a8a8a8;"></div>
<div class="t" style="left:482.03px;top:215px;font:normal 400 13.08px 'Liberation Sans',sans-serif;line-height:0;color:#1e1e1e;transform:scaleX(0.8400);">I</div>
<div style="left:533px;top:207px;width:1px;height:16px;background:#a8a8a8;"></div>
<div class="t" style="left:522.96px;top:215px;font:normal 400 13.08px 'Liberation Sans',sans-serif;line-height:0;color:#1e1e1e;transform:scaleX(0.8498);">J</div>
<div style="left:664px;top:207px;width:1px;height:16px;background:#a8a8a8;"></div>
<div class="t" style="left:594.81px;top:215px;font:normal 400 13.08px 'Liberation Sans',sans-serif;line-height:0;color:#1e1e1e;transform:scaleX(0.8400);">K</div>
<div style="left:795px;top:207px;width:1px;height:16px;background:#a8a8a8;"></div>
<div class="t" style="left:726.61px;top:215px;font:normal 400 13.08px 'Liberation Sans',sans-serif;line-height:0;color:#1e1e1e;transform:scaleX(0.8491);">L</div>
<div style="left:926px;top:207px;width:1px;height:16px;background:#a8a8a8;"></div>
<div class="t" style="left:856.35px;top:215px;font:normal 400 13.08px 'Liberation Sans',sans-serif;line-height:0;color:#1e1e1e;transform:scaleX(0.8460);">M</div>
<div style="left:1057px;top:207px;width:1px;height:16px;background:#a8a8a8;"></div>
<div class="t" style="left:987.95px;top:215px;font:normal 400 13.08px 'Liberation Sans',sans-serif;line-height:0;color:#1e1e1e;transform:scaleX(0.8472);">N</div>
<div style="left:1080px;top:207px;width:1px;height:16px;background:#a8a8a8;"></div>
<div class="t" style="left:1064.57px;top:215px;font:normal 400 13.08px 'Liberation Sans',sans-serif;line-height:0;color:#1e1e1e;transform:scaleX(0.8400);">O</div>
<div style="left:1159px;top:207px;width:1px;height:16px;background:#a8a8a8;"></div>
<div class="t" style="left:1115.91px;top:215px;font:normal 400 13.08px 'Liberation Sans',sans-serif;line-height:0;color:#1e1e1e;transform:scaleX(0.8476);">P</div>
<div style="left:1236px;top:207px;width:1px;height:16px;background:#a8a8a8;"></div>
<div class="t" style="left:1193.62px;top:215px;font:normal 400 13.08px 'Liberation Sans',sans-serif;line-height:0;color:#1e1e1e;transform:scaleX(0.8400);">Q</div>
<div style="left:1315px;top:207px;width:1px;height:16px;background:#a8a8a8;"></div>
<div class="t" style="left:1271.82px;top:215px;font:normal 400 13.08px 'Liberation Sans',sans-serif;line-height:0;color:#1e1e1e;transform:scaleX(0.8468);">R</div>
<div style="left:0px;top:223px;width:25px;height:495px;background:#e6e6e6;"></div>
<div style="left:25px;top:223px;width:1px;height:495px;background:#ababab;"></div>
<div style="left:0px;top:224px;width:25px;height:46px;background:#d2d2d2;"></div>
<div style="left:0px;top:270px;width:25px;height:1px;background:#acacac;"></div>
<div style="left:0;top:224px;width:25px;height:46px;overflow:hidden">
<div class="t" style="left:8.90px;top:38px;font:normal 400 13.08px 'Liberation Sans',sans-serif;line-height:0;color:#217346;transform:scaleX(1.1022);">1</div>
</div>
<div style="left:0px;top:306px;width:25px;height:1px;background:#acacac;"></div>
<div style="left:0;top:271px;width:25px;height:35px;overflow:hidden">
<div class="t" style="left:9.35px;top:27px;font:normal 400 13.08px 'Liberation Sans',sans-serif;line-height:0;color:#222;transform:scaleX(1.0333);">2</div>
</div>
<div style="left:0px;top:330px;width:25px;height:1px;background:#acacac;"></div>
<div style="left:0;top:307px;width:25px;height:23px;overflow:hidden">
<div class="t" style="left:9.50px;top:15px;font:normal 400 13.08px 'Liberation Sans',sans-serif;line-height:0;color:#222;transform:scaleX(1.0020);">3</div>
</div>
<div style="left:0px;top:360px;width:25px;height:1px;background:#acacac;"></div>
<div style="left:0;top:331px;width:25px;height:29px;overflow:hidden">
<div class="t" style="left:9.70px;top:21px;font:normal 400 13.08px 'Liberation Sans',sans-serif;line-height:0;color:#222;transform:scaleX(0.9448);">4</div>
</div>
<div style="left:0px;top:416px;width:25px;height:1px;background:#acacac;"></div>
<div style="left:0;top:361px;width:25px;height:55px;overflow:hidden">
<div class="t" style="left:9.50px;top:47px;font:normal 400 13.08px 'Liberation Sans',sans-serif;line-height:0;color:#222;transform:scaleX(0.9920);">5</div>
</div>
<div style="left:0px;top:421px;width:25px;height:1px;background:#acacac;"></div>
<div style="left:0px;top:452px;width:25px;height:1px;background:#acacac;"></div>
<div style="left:0;top:422px;width:25px;height:30px;overflow:hidden">
<div class="t" style="left:9.28px;top:22px;font:normal 400 13.08px 'Liberation Sans',sans-serif;line-height:0;color:#222;transform:scaleX(1.0442);">7</div>
</div>
<div style="left:0px;top:508px;width:25px;height:1px;background:#acacac;"></div>
<div style="left:0;top:453px;width:25px;height:55px;overflow:hidden">
<div class="t" style="left:9.43px;top:47px;font:normal 400 13.08px 'Liberation Sans',sans-serif;line-height:0;color:#222;transform:scaleX(1.0122);">8</div>
</div>
<div style="left:0px;top:513px;width:25px;height:1px;background:#acacac;"></div>
<div style="left:0px;top:544px;width:25px;height:1px;background:#acacac;"></div>
<div style="left:0;top:514px;width:25px;height:30px;overflow:hidden">
<div class="t" style="left:6.47px;top:22px;font:normal 400 13.08px 'Liberation Sans',sans-serif;line-height:0;color:#222;transform:scaleX(0.8846);">10</div>
</div>
<div style="left:0px;top:600px;width:25px;height:1px;background:#acacac;"></div>
<div style="left:0;top:545px;width:25px;height:55px;overflow:hidden">
<div class="t" style="left:6.39px;top:47px;font:normal 400 13.08px 'Liberation Sans',sans-serif;line-height:0;color:#222;transform:scaleX(0.9634);">11</div>
</div>
<div style="left:0px;top:605px;width:25px;height:1px;background:#acacac;"></div>
<div style="left:0px;top:636px;width:25px;height:1px;background:#acacac;"></div>
<div style="left:0;top:606px;width:25px;height:30px;overflow:hidden">
<div class="t" style="left:6.46px;top:22px;font:normal 400 13.08px 'Liberation Sans',sans-serif;line-height:0;color:#222;transform:scaleX(0.8889);">13</div>
</div>
<div style="left:0px;top:692px;width:25px;height:1px;background:#acacac;"></div>
<div style="left:0;top:637px;width:25px;height:55px;overflow:hidden">
<div class="t" style="left:6.47px;top:47px;font:normal 400 13.08px 'Liberation Sans',sans-serif;line-height:0;color:#222;transform:scaleX(0.8762);">14</div>
</div>
<div style="left:0px;top:704px;width:25px;height:1px;background:#acacac;"></div>
<div style="left:0;top:693px;width:25px;height:11px;overflow:hidden">
<div class="t" style="left:6.47px;top:3px;font:normal 400 13.08px 'Liberation Sans',sans-serif;line-height:0;color:#222;transform:scaleX(0.8846);">15</div>
</div>
<div style="left:0px;top:717px;width:25px;height:1px;background:#acacac;"></div>
<div style="left:0;top:705px;width:25px;height:12px;overflow:hidden">
<div class="t" style="left:6.46px;top:9px;font:normal 400 13.08px 'Liberation Sans',sans-serif;line-height:0;color:#222;transform:scaleX(0.8889);">16</div>
</div>
<div style="left:26px;top:224px;width:1318px;height:493px;background:#fff;"></div>
<div style="left:1344px;top:207px;width:22px;height:511px;background:#e6e6e6;"></div>
<div style="left:1344px;top:223px;width:1px;height:495px;background:#ababab;"></div>
<div style="left:0px;top:717px;width:1344px;height:1px;background:#ababab;"></div>
<div style="left:26px;top:224px;width:1318px;height:46px;background:#404040;"></div>
<div style="left:750px;top:224px;width:99px;height:46px;background:#6699cc;"></div>
<div style="left:26px;top:270px;width:1318px;height:37px;background:#6699cc;"></div>
<div style="left:305px;top:278px;width:175px;height:29px;background:#fff;"></div>
<svg style="position:absolute;left:40px;top:233px;" width="90" height="30" viewBox="40 233 90 30"><path d="M43.8 241.2A4.8 4.8 0 0 1 48.6 236.4H53.2A4.8 4.8 0 0 1 58 241.2M43.8 243.2V248.8A4.8 4.8 0 0 0 48.6 253.6H53.2A4.8 4.8 0 0 0 58 248.8V243.2" fill="none" stroke="#fff" stroke-width="2.3"/><rect x="48" y="256" width="6" height="1.1" fill="#fff"/><path d="M48.4 257.7h5.2q-0.6 2-2.6 2q-2 0-2.6-2z" fill="#fff"/><rect x="91.7" y="239" width="0.9" height="14" fill="#9a9a9a"/></svg>
<div class="t" style="left:62.64px;top:246px;font:normal 400 14.53px 'Liberation Sans',sans-serif;line-height:0;color:#fff;transform:scaleX(0.8966);">LUZ</div>
<div class="t" style="left:95.56px;top:244px;font:normal 400 7.27px 'Liberation Sans',sans-serif;line-height:0;color:#d8d8d8;transform:scaleX(0.7860);">Planilhas</div>
<div class="t" style="left:95.56px;top:250px;font:normal 400 7.27px 'Liberation Sans',sans-serif;line-height:0;color:#d8d8d8;transform:scaleX(0.7831);">Empresariais</div>
<div class="t" style="left:176.56px;top:248px;font:normal 700 12.21px 'Liberation Sans',sans-serif;line-height:0;color:#fff;transform:scaleX(0.8815);">CADASTRO</div>
<div class="t" style="left:290.09px;top:248px;font:normal 700 12.21px 'Liberation Sans',sans-serif;line-height:0;color:#fff;transform:scaleX(0.8794);">PPRA</div>
<div class="t" style="left:382.96px;top:248px;font:normal 700 12.21px 'Liberation Sans',sans-serif;line-height:0;color:#fff;transform:scaleX(0.9084);">PCMSO</div>
<div class="t" style="left:664.18px;top:248px;font:normal 700 12.21px 'Liberation Sans',sans-serif;line-height:0;color:#fff;transform:scaleX(0.8823);">RELATÓRIOS</div>
<div class="t" style="left:763.47px;top:248px;font:normal 700 12.21px 'Liberation Sans',sans-serif;line-height:0;color:#fff;transform:scaleX(0.9020);">DASHBOARD</div>
<div class="t" style="left:864.08px;top:248px;font:normal 700 12.21px 'Liberation Sans',sans-serif;line-height:0;color:#fff;transform:scaleX(0.8852);">INSTRUÇÕES</div>
<div class="t" style="left:463.26px;top:240px;font:normal 700 12.21px 'Liberation Sans',sans-serif;line-height:0;color:#fff;transform:scaleX(0.8809);">CONTROLE DE</div>
<div class="t" style="left:471.63px;top:256px;font:normal 700 12.21px 'Liberation Sans',sans-serif;line-height:0;color:#fff;transform:scaleX(0.8768);">ACIDENTES</div>
<div class="t" style="left:561.86px;top:240px;font:normal 700 12.21px 'Liberation Sans',sans-serif;line-height:0;color:#fff;transform:scaleX(0.8752);">CONTROLE DE</div>
<div class="t" style="left:577.67px;top:256px;font:normal 700 12.21px 'Liberation Sans',sans-serif;line-height:0;color:#fff;transform:scaleX(0.8946);">EXAMES</div>
<div class="t" style="left:138.77px;top:294px;font:normal 700 12.94px 'Liberation Sans',sans-serif;line-height:0;color:#fff;transform:scaleX(0.8368);">DASHBOARD DE ACIDENTES</div>
<div class="t" style="left:323.66px;top:294px;font:normal 700 12.94px 'Liberation Sans',sans-serif;line-height:0;color:#111;transform:scaleX(0.8425);">DASHBOARD DE EXAMES</div>
<div class="t" style="left:53.53px;top:346px;font:normal 700 15.84px 'Liberation Sans',sans-serif;line-height:0;color:#111;transform:scaleX(0.9086);">Exames Realizados</div>
<div style="left:50px;top:360px;width:213px;height:57px;background:#ffc000;border:1px solid #dadada"></div>
<div class="t" style="left:144.35px;top:389px;font:normal 700 19.04px 'Liberation Sans',sans-serif;line-height:0;color:#fff;transform:scaleX(1.0564);">15</div>
<div class="t" style="left:53.94px;top:438px;font:normal 700 15.84px 'Liberation Sans',sans-serif;line-height:0;color:#111;transform:scaleX(0.9021);">Com Complicações</div>
<div style="left:50px;top:452px;width:213px;height:57px;background:#f0472e;border:1px solid #dadada"></div>
<div class="t" style="left:150.30px;top:482px;font:normal 700 19.04px 'Liberation Sans',sans-serif;line-height:0;color:#fff;transform:scaleX(1.1243);">9</div>
<div class="t" style="left:54.11px;top:530px;font:normal 700 15.84px 'Liberation Sans',sans-serif;line-height:0;color:#111;transform:scaleX(0.9022);">Sem Complicações</div>
<div style="left:50px;top:544px;width:213px;height:57px;background:#5aad40;border:1px solid #dadada"></div>
<div class="t" style="left:150.50px;top:573px;font:normal 700 19.04px 'Liberation Sans',sans-serif;line-height:0;color:#fff;transform:scaleX(1.1568);">6</div>
<div class="t" style="left:53.52px;top:622px;font:normal 700 15.84px 'Liberation Sans',sans-serif;line-height:0;color:#111;transform:scaleX(0.9220);">Percentual de Complicações</div>
<div style="left:50px;top:636px;width:213px;height:57px;background:#f0472e;border:1px solid #dadada"></div>
<div class="t" style="left:122.49px;top:665px;font:normal 700 19.04px 'Liberation Sans',sans-serif;line-height:0;color:#fff;transform:scaleX(1.0262);">60,00%</div>
<div style="left:276px;top:360px;width:242px;height:345px;background:#f2f2f2;border:1px solid #d9d9d9"></div>
<div class="t" style="left:279.46px;top:345px;font:normal 700 15.84px 'Liberation Sans',sans-serif;line-height:0;color:#111;transform:scaleX(0.9071);">% de Complicações</div>
<svg style="position:absolute;left:300px;top:387px;" width="190" height="190" viewBox="300 387 190 190"><path d="M394.80 392.00A89.9 89.9 0 1 1 341.96 554.63L368.29 518.39A45.1 45.1 0 1 0 394.80 436.80z" fill="#f0472e" stroke="#fff" stroke-width="0.8" stroke-linejoin="round"/><path d="M341.96 554.63A89.9 89.9 0 0 1 394.80 392.00L394.80 436.80A45.1 45.1 0 0 0 368.29 518.39z" fill="#5aad40" stroke="#fff" stroke-width="0.8" stroke-linejoin="round"/></svg>
<div class="t" style="left:319.47px;top:461px;font:normal 400 11.92px 'Liberation Sans',sans-serif;line-height:0;color:#fff;transform:scaleX(0.9229);">40%</div>
<div class="t" style="left:448.03px;top:504px;font:normal 400 11.92px 'Liberation Sans',sans-serif;line-height:0;color:#fff;transform:scaleX(0.9162);">60%</div>
<div style="left:349px;top:655px;width:6px;height:5px;background:#f0472e;"></div>
<div class="t" style="left:358.17px;top:656px;font:normal 400 11.34px 'Liberation Sans',sans-serif;line-height:0;color:#111;transform:scaleX(0.9380);">Com Complicações</div>
<div style="left:349px;top:681px;width:6px;height:5px;background:#5aad40;"></div>
<div class="t" style="left:358.23px;top:682px;font:normal 400 11.34px 'Liberation Sans',sans-serif;line-height:0;color:#111;transform:scaleX(0.9341);">Sem Complicações</div>
<div style="left:533px;top:360px;width:762px;height:345px;background:#f2f2f2;border:1px solid #d9d9d9"></div>
<div class="t" style="left:536.22px;top:345px;font:normal 700 15.84px 'Liberation Sans',sans-serif;line-height:0;color:#111;transform:scaleX(0.9242);">Exames realizados por mês</div>
<div style="left:561.00px;top:589.00px;width:36px;height:86.00px;background:#ffc000"></div>
<div class="t" style="left:575.88px;top:576px;font:normal 400 11.77px 'Liberation Sans',sans-serif;line-height:0;color:#111;">1</div>
<div class="t" style="left:561.12px;top:689px;font:normal 400 11.34px 'Liberation Sans',sans-serif;line-height:0;color:#111;transform:scaleX(0.9496);">Janeiro</div>
<div style="left:621.47px;top:419.00px;width:36px;height:256.00px;background:#ffc000"></div>
<div class="t" style="left:636.53px;top:406px;font:normal 400 11.77px 'Liberation Sans',sans-serif;line-height:0;color:#111;">3</div>
<div class="t" style="left:615.58px;top:689px;font:normal 400 11.34px 'Liberation Sans',sans-serif;line-height:0;color:#111;transform:scaleX(0.9833);">Fevereiro</div>
<div style="left:681.94px;top:589.00px;width:36px;height:86.00px;background:#ffc000"></div>
<div class="t" style="left:696.82px;top:576px;font:normal 400 11.77px 'Liberation Sans',sans-serif;line-height:0;color:#111;">1</div>
<div class="t" style="left:683.44px;top:689px;font:normal 400 11.34px 'Liberation Sans',sans-serif;line-height:0;color:#111;transform:scaleX(1.0267);">Março</div>
<div style="left:742.41px;top:589.00px;width:36px;height:86.00px;background:#ffc000"></div>
<div class="t" style="left:757.28px;top:576px;font:normal 400 11.77px 'Liberation Sans',sans-serif;line-height:0;color:#111;">1</div>
<div class="t" style="left:749.10px;top:689px;font:normal 400 11.34px 'Liberation Sans',sans-serif;line-height:0;color:#111;transform:scaleX(1.0194);">Abril</div>
<div style="left:802.88px;top:504.00px;width:36px;height:171.00px;background:#ffc000"></div>
<div class="t" style="left:817.91px;top:491px;font:normal 400 11.77px 'Liberation Sans',sans-serif;line-height:0;color:#111;">2</div>
<div class="t" style="left:807.82px;top:689px;font:normal 400 11.34px 'Liberation Sans',sans-serif;line-height:0;color:#111;transform:scaleX(1.0465);">Maio</div>
<div style="left:863.35px;top:589.00px;width:36px;height:86.00px;background:#ffc000"></div>
<div class="t" style="left:878.23px;top:576px;font:normal 400 11.77px 'Liberation Sans',sans-serif;line-height:0;color:#111;">1</div>
<div class="t" style="left:866.22px;top:689px;font:normal 400 11.34px 'Liberation Sans',sans-serif;line-height:0;color:#111;transform:scaleX(0.9627);">Junho</div>
<div class="t" style="left:938.85px;top:662px;font:normal 400 11.77px 'Liberation Sans',sans-serif;line-height:0;color:#111;">0</div>
<div class="t" style="left:928.82px;top:689px;font:normal 400 11.34px 'Liberation Sans',sans-serif;line-height:0;color:#111;transform:scaleX(0.9441);">Julho</div>
<div style="left:984.29px;top:504.00px;width:36px;height:171.00px;background:#ffc000"></div>
<div class="t" style="left:999.32px;top:491px;font:normal 400 11.77px 'Liberation Sans',sans-serif;line-height:0;color:#111;">2</div>
<div class="t" style="left:985.50px;top:689px;font:normal 400 11.34px 'Liberation Sans',sans-serif;line-height:0;color:#111;transform:scaleX(0.9727);">Agosto</div>
<div style="left:1044.76px;top:589.00px;width:36px;height:86.00px;background:#ffc000"></div>
<div class="t" style="left:1059.63px;top:576px;font:normal 400 11.77px 'Liberation Sans',sans-serif;line-height:0;color:#111;">1</div>
<div class="t" style="left:1038.30px;top:689px;font:normal 400 11.34px 'Liberation Sans',sans-serif;line-height:0;color:#111;transform:scaleX(0.9945);">Setembro</div>
<div style="left:1105.23px;top:589.00px;width:36px;height:86.00px;background:#ffc000"></div>
<div class="t" style="left:1120.11px;top:576px;font:normal 400 11.77px 'Liberation Sans',sans-serif;line-height:0;color:#111;">1</div>
<div class="t" style="left:1102.19px;top:689px;font:normal 400 11.34px 'Liberation Sans',sans-serif;line-height:0;color:#111;transform:scaleX(1.0182);">Outubro</div>
<div style="left:1165.70px;top:589.00px;width:36px;height:86.00px;background:#ffc000"></div>
<div class="t" style="left:1180.58px;top:576px;font:normal 400 11.77px 'Liberation Sans',sans-serif;line-height:0;color:#111;">1</div>
<div class="t" style="left:1157.65px;top:689px;font:normal 400 11.34px 'Liberation Sans',sans-serif;line-height:0;color:#111;transform:scaleX(1.0089);">Novembro</div>
<div style="left:1226.17px;top:589.00px;width:36px;height:86.00px;background:#ffc000"></div>
<div class="t" style="left:1241.05px;top:576px;font:normal 400 11.77px 'Liberation Sans',sans-serif;line-height:0;color:#111;">1</div>
<div class="t" style="left:1218.48px;top:689px;font:normal 400 11.34px 'Liberation Sans',sans-serif;line-height:0;color:#111;transform:scaleX(0.9793);">Dezembro</div>
<div style="left:24px;top:222px;width:18px;height:50px;background:transparent;border:2px solid #217346"></div>
<div style="left:26px;top:224px;width:14px;height:46px;background:transparent;border:1px solid #fff"></div>
<div style="left:37px;top:267px;width:6px;height:6px;background:#217346;border-left:1px solid #fff;border-top:1px solid #fff"></div>
<div style="left:1348px;top:209px;width:15px;height:15px;background:#fff;border:1px solid #ababab"></div>
<svg style="position:absolute;left:1350px;top:211px;" width="11" height="11" viewBox="1350 211 11 11"><path d="M1351.5 219h8l-4-4.2z" fill="#666"/></svg>
<div style="left:1348px;top:583px;width:15px;height:120px;background:#dadada;"></div>
<div style="left:1348px;top:223px;width:15px;height:360px;background:#fff;border:1px solid #ababab"></div>
<div style="left:1348px;top:703px;width:15px;height:15px;background:#fff;border:1px solid #ababab"></div>
<svg style="position:absolute;left:1350px;top:705px;" width="11" height="11" viewBox="1350 705 11 11"><path d="M1351.5 710h8l-4 4.2z" fill="#666"/></svg>
<div style="left:0px;top:718px;width:1366px;height:27px;background:#e6e6e6;"></div>
<div style="left:0px;top:745px;width:1366px;height:1px;background:#c6c6c6;"></div>
<svg style="position:absolute;left:20px;top:722px;" width="50" height="18" viewBox="20 722 50 18"><path d="M31 727.5v7l-3.5-3.5z" fill="#c0c0c0"/><path d="M56 727v8l4-4z" fill="#217346"/></svg>
<div style="left:100px;top:721px;width:1px;height:20px;background:#a6a6a6;"></div>
<div style="left:190px;top:721px;width:1px;height:20px;background:#a6a6a6;"></div>
<div style="left:289px;top:721px;width:1px;height:20px;background:#a6a6a6;"></div>
<div style="left:380px;top:721px;width:1px;height:20px;background:#a6a6a6;"></div>
<div style="left:437px;top:721px;width:1px;height:20px;background:#a6a6a6;"></div>
<div style="left:506px;top:721px;width:1px;height:20px;background:#a6a6a6;"></div>
<div style="left:551px;top:721px;width:1px;height:20px;background:#a6a6a6;"></div>
<div style="left:595px;top:721px;width:1px;height:20px;background:#a6a6a6;"></div>
<div style="left:671px;top:721px;width:1px;height:20px;background:#a6a6a6;"></div>
<div style="left:753px;top:721px;width:1px;height:20px;background:#a6a6a6;"></div>
<div style="left:790px;top:721px;width:1px;height:20px;background:#a6a6a6;"></div>
<div style="left:925px;top:721px;width:1px;height:20px;background:#a6a6a6;"></div>
<div style="left:837px;top:717px;width:47px;height:25px;background:#e6e6e6;border-left:1px solid #ababab;border-right:1px solid #ababab"></div>
<div style="left:838px;top:740px;width:45px;height:2px;background:#217346;"></div>
<div class="t" style="left:113.84px;top:731px;font:normal 400 12.50px 'Liberation Sans',sans-serif;line-height:0;color:#444;transform:scaleX(0.9019);">CAD_AREA</div>
<div class="t" style="left:201.82px;top:731px;font:normal 400 12.50px 'Liberation Sans',sans-serif;line-height:0;color:#444;transform:scaleX(0.9251);">CAD_CARGO</div>
<div class="t" style="left:301.72px;top:731px;font:normal 400 12.50px 'Liberation Sans',sans-serif;line-height:0;color:#444;transform:scaleX(0.9343);">CAD_FUNC</div>
<div class="t" style="left:391.50px;top:731px;font:normal 400 12.50px 'Liberation Sans',sans-serif;line-height:0;color:#444;transform:scaleX(0.8970);">PPRA</div>
<div class="t" style="left:447.43px;top:731px;font:normal 400 12.50px 'Liberation Sans',sans-serif;line-height:0;color:#444;transform:scaleX(0.9672);">PCMSO</div>
<div class="t" style="left:516.69px;top:731px;font:normal 400 12.50px 'Liberation Sans',sans-serif;line-height:0;color:#444;transform:scaleX(0.9820);">C-A</div>
<div class="t" style="left:562.90px;top:731px;font:normal 400 12.50px 'Liberation Sans',sans-serif;line-height:0;color:#444;transform:scaleX(0.9521);">C-E</div>
<div class="t" style="left:607.19px;top:731px;font:normal 400 12.50px 'Liberation Sans',sans-serif;line-height:0;color:#444;transform:scaleX(0.9135);">RC_ACID</div>
<div class="t" style="left:682.94px;top:731px;font:normal 400 12.50px 'Liberation Sans',sans-serif;line-height:0;color:#444;transform:scaleX(0.9593);">RC_EXAM</div>
<div class="t" style="left:764.50px;top:731px;font:normal 400 12.50px 'Liberation Sans',sans-serif;line-height:0;color:#444;">RI</div>
<div class="t" style="left:801.03px;top:731px;font:normal 400 12.50px 'Liberation Sans',sans-serif;line-height:0;color:#444;transform:scaleX(1.0732);">D-A</div>
<div class="t" style="left:895.38px;top:731px;font:normal 400 12.50px 'Liberation Sans',sans-serif;line-height:0;color:#444;transform:scaleX(1.0813);">INI</div>
<div class="t" style="left:848.72px;top:731px;font:normal 700 13.08px 'Liberation Sans',sans-serif;line-height:0;color:#217346;transform:scaleX(1.0083);">D-E</div>
<div style="left:936px;top:718px;width:8px;height:27px;overflow:hidden">
<div class="t" style="left:1.70px;top:13px;font:normal 400 12.50px 'Liberation Sans',sans-serif;line-height:0;color:#444;">D</div>
</div>
<div style="left:953.0px;top:733px;width:2.4px;height:2.4px;background:#1e5e36;"></div>
<div style="left:956.6px;top:733px;width:2.4px;height:2.4px;background:#1e5e36;"></div>
<div style="left:960.2px;top:733px;width:2.4px;height:2.4px;background:#1e5e36;"></div>
<svg style="position:absolute;left:975px;top:721px;" width="22" height="21" viewBox="975 721 22 21"><circle cx="985" cy="730.9" r="7.6" fill="none" stroke="#777" stroke-width="1.2"/><path d="M985 727v7.8M981.1 730.9h7.8" stroke="#777" stroke-width="1.6"/></svg>
<div style="left:1013px;top:726px;width:2px;height:2px;background:#a6a6a6;"></div>
<div style="left:1013px;top:730px;width:2px;height:2px;background:#a6a6a6;"></div>
<div style="left:1013px;top:734px;width:2px;height:2px;background:#a6a6a6;"></div>
<div style="left:1030px;top:724px;width:300px;height:15px;background:#dadada;"></div>
<div style="left:1030px;top:724px;width:15px;height:15px;background:#fff;border:1px solid #ababab"></div>
<svg style="position:absolute;left:1032px;top:726px;" width="11" height="11" viewBox="1032 726 11 11"><path d="M1040 727.5v8l-4.2-4z" fill="#666"/></svg>
<div style="left:1044px;top:724px;width:243px;height:15px;background:#fff;border:1px solid #ababab"></div>
<div style="left:1332px;top:724px;width:15px;height:15px;background:#fff;border:1px solid #ababab"></div>
<svg style="position:absolute;left:1334px;top:726px;" width="11" height="11" viewBox="1334 726 11 11"><path d="M1337.8 727.5v8l4.2-4z" fill="#666"/></svg>
<div style="left:0px;top:746px;width:1366px;height:20px;background:#f3f2f1;"></div>
<svg style="position:absolute;left:6px;top:748px;" width="18" height="16" viewBox="6 748 18 16"><circle cx="11" cy="751.9" r="2.9" fill="#555"/><rect x="15.2" y="750.1" width="5.7" height="2.5" fill="#555"/><path d="M9.5 756v5.3h11v-9" fill="none" stroke="#555" stroke-width="1.2"/><path d="M11.5 758.7h1.5M14.5 758.7h1.5M17.5 758.7h1.5M14.5 756.5h1.5M17.5 756.5h1.5M11.5 760.7h1.5M14.5 760.7h1.5M17.5 760.7h1.5" stroke="#555" stroke-width="0.9"/></svg>
<div style="left:1086px;top:746px;width:38px;height:20px;background:#c8c6c4;"></div>
<svg style="position:absolute;left:1096px;top:747px;" width="16" height="16" viewBox="1096 747 16 16"><rect x="1098.7" y="749.6" width="11.6" height="11.6" fill="none" stroke="#666" stroke-width="1.1"/><path d="M1102.6 749.6v11.6M1106.4 749.6v11.6M1098.7 753.5h11.6M1098.7 757.3h11.6" stroke="#666" stroke-width="1.1"/></svg>
<svg style="position:absolute;left:1134px;top:747px;" width="18" height="16" viewBox="1134 747 18 16"><rect x="1136.6" y="749.3" width="12.6" height="11.8" fill="none" stroke="#666" stroke-width="1.1"/><rect x="1139.3" y="751.8" width="7.2" height="6.8" fill="none" stroke="#666" stroke-width="1"/><path d="M1140.5 753.9h4.8M1140.5 755.4h4.8M1140.5 756.9h4.8" stroke="#666" stroke-width="0.8"/></svg>
<svg style="position:absolute;left:1172px;top:747px;" width="18" height="16" viewBox="1172 747 18 16"><rect x="1174.7" y="749.3" width="12.6" height="11.8" fill="none" stroke="#666" stroke-width="1.1"/><path d="M1174.7 755.5h7.8v-6.2M1179 749.3v6.2" fill="none" stroke="#666" stroke-width="1.1"/></svg>
<div style="left:1205px;top:755px;width:6px;height:2px;background:#555;"></div>
<div style="left:1215px;top:756px;width:100px;height:1px;background:#a0a0a0;"></div>
<div style="left:1265px;top:753px;width:1px;height:6px;background:#a0a0a0;"></div>
<div style="left:1258px;top:750px;width:5px;height:11px;background:#666;"></div>
<div style="left:1318px;top:755px;width:8px;height:2px;background:#555;"></div>
<div style="left:1321px;top:752px;width:2px;height:8px;background:#555;"></div>
<div class="t" style="left:1337.00px;top:756px;font:normal 400 11.63px 'Liberation Sans',sans-serif;line-height:0;color:#444;transform:scaleX(0.8919);">90%</div>
<div style="left:0px;top:765px;width:1366px;height:1px;background:#fafafa;"></div>
<div style="left:0px;top:766px;width:1366px;height:2px;background:#2a2a2a;"></div>
<div style="left:48px;top:765px;width:344px;height:1px;background:#f3f2f1;"></div>
<div style="left:48px;top:766px;width:344px;height:1px;background:#bcbcbc;"></div>
<div style="left:48px;top:767px;width:344px;height:1px;background:#f0f0f0;"></div>
<div style="left:689px;top:766px;width:48px;height:2px;background:#5a5a5a;"></div>
</body></html>
